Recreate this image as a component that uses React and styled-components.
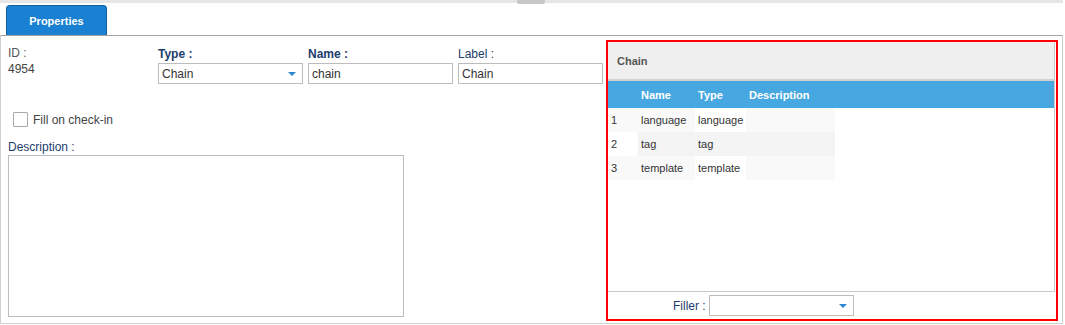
import React from 'react'
import styled, { createGlobalStyle } from 'styled-components'

const GlobalStyle = createGlobalStyle`
  body {
    margin: 0;
    background: #fff;
    font-family: 'Liberation Sans', Arial, sans-serif;
    font-size: 12px;
    color: #333;
  }
`

const rows = [
  { id: 1, name: 'language', type: 'language' },
  { id: 2, name: 'tag', type: 'tag' },
  { id: 3, name: 'template', type: 'template' },
]

const Page = styled.div`
  width: 1063px;
  height: 325px;
  display: flex;
  flex-direction: column;
`

const TopStrip = styled.div`
  height: 3px;
  background: #e6e6e6;
  position: relative;
`

const Handle = styled.div`
  position: absolute;
  left: 517px;
  top: 0;
  width: 28px;
  height: 4px;
  background: #c8c8c8;
  border-radius: 0 0 2px 2px;
`

const TabBar = styled.div`
  display: flex;
  padding: 2px 0 0 6px;
`

const Tab = styled.div`
  width: 101px;
  height: 30px;
  box-sizing: border-box;
  padding-top: 1px;
  display: flex;
  align-items: center;
  justify-content: center;
  background: #1a80d2;
  border: 1px solid #0f5f9f;
  border-bottom: none;
  border-radius: 4px 4px 0 0;
  color: #fff;
  font-weight: bold;
  font-size: 11px;
`

const Panel = styled.div`
  flex: 1;
  display: flex;
  border-top: 1px solid #a3a3a3;
  border-left: 1px solid #cfcfcf;
  border-right: 1px solid #cfcfcf;
  border-bottom: 1px solid #cfcfcf;
  margin-bottom: 1px;
`

const Form = styled.div`
  width: 598px;
  padding: 10px 0 0 7px;
  display: flex;
  flex-direction: column;
`

const FieldRow = styled.div`
  display: grid;
  grid-template-columns: repeat(4, 150px);
`

const Field = styled.div`
  display: flex;
  flex-direction: column;
  padding-top: ${p => (p.$offset ? '1px' : '0')};
`

const Label = styled.label`
  font-size: 12px;
  height: 16px;
  color: ${p => (p.$plain ? '#555' : '#1d3d6e')};
  font-weight: ${p => (p.$bold ? 'bold' : 'normal')};
`

const Value = styled.div`
  color: #444;
  font-size: 12px;
`

const InputBox = styled.div`
  width: 145px;
  height: 21px;
  box-sizing: border-box;
  border: 1px solid #bdbdbd;
  display: flex;
  align-items: center;
  justify-content: space-between;
  padding: 0 6px 0 3px;
  color: #333;
  background: #fff;
`

const Caret = styled.span`
  width: 0;
  height: 0;
  border-left: 4px solid transparent;
  border-right: 4px solid transparent;
  border-top: 4px solid #2a86d0;
`

const CheckRow = styled.label`
  display: flex;
  align-items: center;
  gap: 5px;
  margin: 28px 0 0 5px;
  color: #444;
`

const Box = styled.span`
  width: 13px;
  height: 13px;
  border: 1px solid #a8a8a8;
  border-radius: 1px;
  background: #fff;
`

const DescLabel = styled(Label)`
  margin-top: 13px;
  height: 14px;
`

const TextArea = styled.div`
  width: 396px;
  height: 162px;
  box-sizing: border-box;
  border: 1px solid #bdbdbd;
  margin-top: 1px;
`

const Chain = styled.div`
  width: 448px;
  margin: 4px 0 2px 0;
  border: 2px solid #f00;
  display: flex;
  flex-direction: column;
`

const Grid = styled.div`
  flex: 1;
  display: flex;
  flex-direction: column;
  margin-right: 1px;
  border-right: 1px solid #c9c9c9;
  border-bottom: 1px solid #c9c9c9;
`

const GridTitle = styled.div`
  height: 37px;
  background: #efefef;
  border-bottom: 2px solid #d2d2d2;
  display: flex;
  align-items: center;
  padding-left: 9px;
  font-size: 11px;
  font-weight: bold;
  color: #555;
`

const Table = styled.div`
  display: grid;
  grid-template-columns: 30px 57px 51px 89px 1fr;
  font-size: 11px;
`

const HeadCell = styled.div`
  height: 27px;
  background: #47a7e1;
  color: #fff;
  font-weight: bold;
  display: flex;
  align-items: center;
  padding-left: 3px;
`

const Cell = styled.div`
  height: 24px;
  display: flex;
  align-items: center;
  padding-left: 3px;
  color: #333;
  background: ${p => p.$bg};
`

const Footer = styled.div`
  height: 27px;
  display: flex;
  align-items: center;
  padding-left: 65px;
  gap: 3px;
  color: #1d3d6e;
`

const shade = (row, col) => {
  if (col === 4) return '#fff'
  if (row % 2 === 1) return col === 0 ? '#fff' : '#f4f4f4'
  return col === 2 ? '#fff' : '#f9f9f9'
}

const App = () => {
  return (
    <Page>
      <GlobalStyle />
      <TopStrip>
        <Handle />
      </TopStrip>
      <TabBar>
        <Tab>Properties</Tab>
      </TabBar>
      <Panel>
        <Form>
          <FieldRow>
            <Field>
              <Label $plain>ID :</Label>
              <Value>4954</Value>
            </Field>
            <Field $offset>
              <Label $bold>Type :</Label>
              <InputBox>
                Chain
                <Caret />
              </InputBox>
            </Field>
            <Field $offset>
              <Label $bold>Name :</Label>
              <InputBox>chain</InputBox>
            </Field>
            <Field $offset>
              <Label>Label :</Label>
              <InputBox>Chain</InputBox>
            </Field>
          </FieldRow>
          <CheckRow>
            <Box />
            Fill on check-in
          </CheckRow>
          <DescLabel>Description :</DescLabel>
          <TextArea />
        </Form>
        <Chain>
          <Grid>
            <GridTitle>Chain</GridTitle>
            <Table>
              <HeadCell />
              <HeadCell>Name</HeadCell>
              <HeadCell>Type</HeadCell>
              <HeadCell>Description</HeadCell>
              <HeadCell />
              {rows.map((r, i) => (
                <React.Fragment key={r.id}>
                  <Cell $bg={shade(i, 0)}>{r.id}</Cell>
                  <Cell $bg={shade(i, 1)}>{r.name}</Cell>
                  <Cell $bg={shade(i, 2)}>{r.type}</Cell>
                  <Cell $bg={shade(i, 3)} />
                  <Cell $bg={shade(i, 4)} />
                </React.Fragment>
              ))}
            </Table>
          </Grid>
          <Footer>
            Filler :
            <InputBox>
              <span />
              <Caret />
            </InputBox>
          </Footer>
        </Chain>
      </Panel>
    </Page>
  )
}

export default App
